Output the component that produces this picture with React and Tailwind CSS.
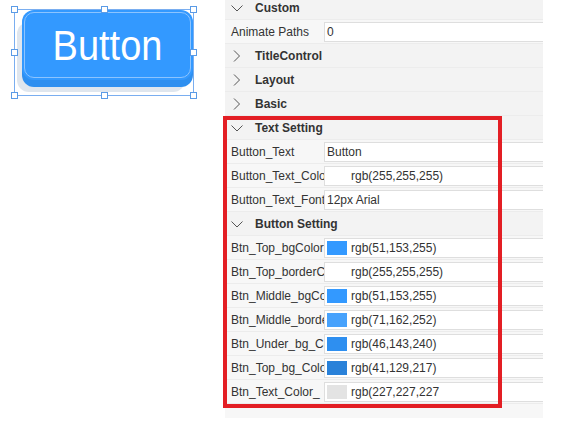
import React from "react";

const Chevron = ({ open }) => (
  <svg width="12" height="12" viewBox="0 0 12 12" className="shrink-0">
    {open ? (
      <polyline points="0.5,3.5 6,9 11.5,3.5" fill="none" stroke="#555" strokeWidth="1" />
    ) : (
      <polyline points="3,0.5 8.5,6 3,11.5" fill="none" stroke="#555" strokeWidth="1" />
    )}
  </svg>
);

function Header({ title, open }) {
  return (
    <div className="h-[24px] flex items-center gap-[12px] pl-[6px] bg-[#f3f3f3] border-b border-[#ececec]">
      <Chevron open={open} />
      <span className="font-bold text-[12px] text-[#333]">{title}</span>
    </div>
  );
}

function Prop({ label, value, swatch, indent }) {
  return (
    <div className="h-[24px] flex items-center bg-[#f7f7f7] border-b border-[#ececec]">
      <div className="w-[99px] pl-[6px] pr-[3px] overflow-hidden whitespace-nowrap text-[12px] text-[#333]">
        {label}
      </div>
      <div className="flex-1 h-[20px] bg-white border border-r-0 border-[#dedede] flex items-center pl-[2px] text-[12px] text-[#333] whitespace-nowrap overflow-hidden">
        {swatch && <span className="w-[20px] h-[14px] mr-[4px] shrink-0" style={{ background: swatch }} />}
        {indent && <span className="w-[24px] shrink-0" />}
        <span>{value}</span>
      </div>
    </div>
  );
}

const Handle = ({ cls }) => (
  <span className={`absolute w-[7px] h-[7px] bg-white border border-[#5b9be6] ${cls}`} />
);

export default function App() {
  return (
    <div className="relative w-[563px] h-[422px] bg-white overflow-hidden flex" style={{ fontFamily: '"Liberation Sans", Arial, sans-serif' }}>
      {/* canvas with the selected widget */}
      <div className="relative w-[225px] h-full shrink-0">
        <div className="absolute left-[17px] top-[22px] w-[168px] h-[70px] rounded-[12px] bg-[#dfe6ee]" />
        <div className="absolute left-[22px] top-[16px] w-[171px] h-[71px] rounded-[12px] bg-[#2e8ff0]" />
        <div className="absolute left-[22px] top-[10px] w-[171px] h-[70px] rounded-[12px] bg-[#3399ff] p-[2px]">
          <div className="w-full h-full rounded-[10px] border border-[#8cc4ff] flex items-center justify-center">
            <span className="text-white text-[38px] leading-none scale-y-110 pt-[2px]">Button</span>
          </div>
        </div>
        <div className="absolute left-[14px] top-[9px] w-[180px] h-[87px] border border-[#7aaef0]" />
        <Handle cls="left-[11px] top-[6px]" />
        <Handle cls="left-[101px] top-[6px]" />
        <Handle cls="left-[190px] top-[6px]" />
        <Handle cls="left-[11px] top-[49px]" />
        <Handle cls="left-[190px] top-[49px]" />
        <Handle cls="left-[11px] top-[92px]" />
        <Handle cls="left-[101px] top-[92px]" />
        <Handle cls="left-[190px] top-[92px]" />
      </div>

      {/* property panel */}
      <div className="w-[318px] -mt-[4px] flex flex-col self-start bg-[#f5f5f5]">
        <Header title="Custom" open />
        <Prop label="Animate Paths" value="0" />
        <Header title="TitleControl" />
        <Header title="Layout" />
        <Header title="Basic" />
        <Header title="Text Setting" open />
        <Prop label="Button_Text" value="Button" />
        <Prop label="Button_Text_Color" value="rgb(255,255,255)" indent />
        <Prop label="Button_Text_Font" value="12px Arial" />
        <Header title="Button Setting" open />
        <Prop label="Btn_Top_bgColor" value="rgb(51,153,255)" swatch="rgb(51,153,255)" />
        <Prop label="Btn_Top_borderColor" value="rgb(255,255,255)" indent />
        <Prop label="Btn_Middle_bgColor" value="rgb(51,153,255)" swatch="rgb(51,153,255)" />
        <Prop label="Btn_Middle_borderColor" value="rgb(71,162,252)" swatch="rgb(71,162,252)" />
        <Prop label="Btn_Under_bg_Color" value="rgb(46,143,240)" swatch="rgb(46,143,240)" />
        <Prop label="Btn_Top_bg_Color" value="rgb(41,129,217)" swatch="rgb(41,129,217)" />
        <Prop label="Btn_Text_Color_" value="rgb(227,227,227" swatch="rgb(227,227,227)" />
        <div className="h-[14px] bg-[#f7f7f7]" />
      </div>

      {/* annotation frame */}
      <div className="absolute left-[223px] top-[116px] w-[279px] h-[292px] border-[4px] border-[#e31e24]" />
    </div>
  );
}
